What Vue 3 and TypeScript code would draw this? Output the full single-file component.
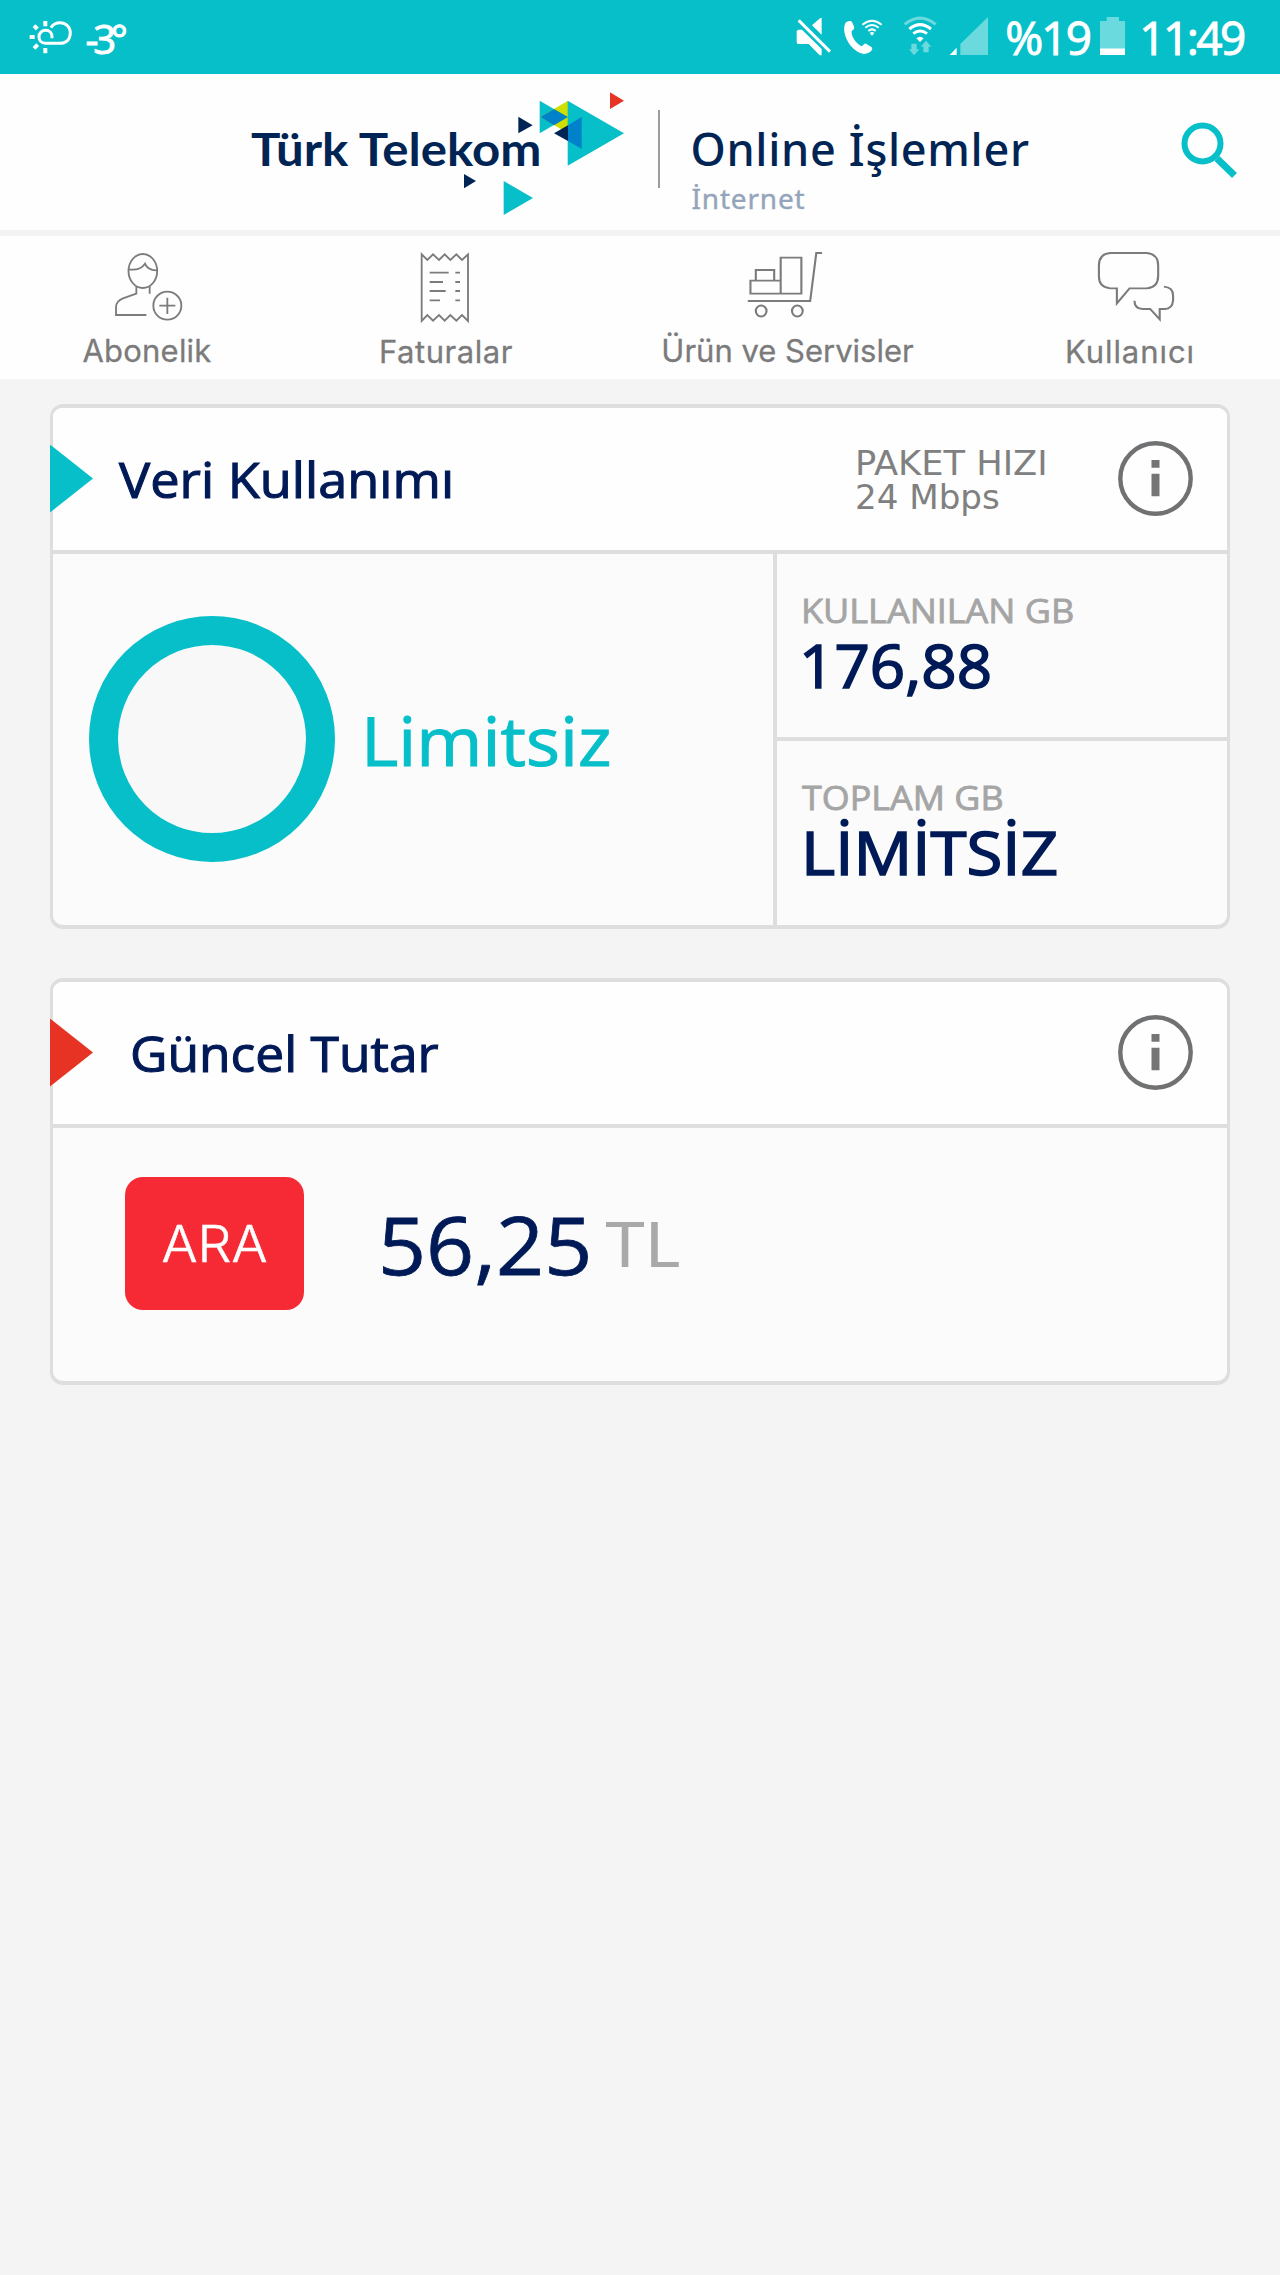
<script setup lang="ts">
interface Stat {
  label: string
  value: string
  kind: string
}

const stats: Stat[] = [
  { label: 'KULLANILAN GB', value: '176,88', kind: 'used' },
  { label: 'TOPLAM GB', value: 'LİMİTSİZ', kind: 'total' },
]
</script>

<template>
  <div class="screen">
    <div class="status">
      <svg class="weather" viewBox="88 0 130 222" fill="none" stroke="#fff" stroke-width="9">
        <path d="M154 83C160 72 171 68 182 68C200 68 212 82 212 99C212 117 200 130 182 130H137C125 130 118 121 118 110C118 99 127 91 138 91C149 91 157 99 157 110V115" />
        <path d="M137 63V79M137 144V160M90 111H105M103 77L113 87M103 145L114 134" stroke-width="12" />
      </svg>
      <span class="temp">-3°</span>
      <div class="spacer"></div>
      <svg class="mute" viewBox="48 0 108 222" fill="#fff">
        <path d="M96 76L121 54H125V104ZM54 89H66L125 147V166H119L86 132H55Q50 132 50 127V94Z" />
        <path d="M56 61L150 155" stroke="#fff" stroke-width="9" />
      </svg>
      <svg class="phone" viewBox="188 0 120 222" fill="none" stroke="#fff">
        <path d="M197 67Q210 59 215 66L222 82Q223 88 214 93C211 107 227 132 245 139Q252 129 257 131L273 141Q279 145 272 154Q262 163 250 162C221 157 196 124 192 95Q190 76 197 67Z" fill="#fff" stroke="none" />
        <path d="M246 74Q275 50 304 74M255 83Q275 67 295 83M264 93Q275 83 286 93" stroke-width="6" />
        <path d="M268 99Q275 93 282 99L275 107Z" fill="#fff" stroke="none" />
      </svg>
      <svg class="wifi" viewBox="370 0 104 222" fill="none" stroke="#fff">
        <path d="M375 73Q421 36 468 73" stroke="#6adadf" stroke-width="9" />
        <path d="M389 87Q421 61 454 87M401 101Q421 85 442 101" stroke-width="9" />
        <path d="M410 115Q421 105 432 115L421 126Z" fill="#fff" stroke="none" />
        <path d="M395 131H411V148H419L403 166L388 148H395ZM431 157V140H423L439 122L455 140H447V157Z" fill="#6adadf" stroke="none" />
      </svg>
      <svg class="signal" viewBox="506 0 120 222">
        <path d="M508 165L529 143V165Z" fill="#fff" />
        <path d="M540 165V132L623 51V165Z" fill="#6adadf" />
      </svg>
      <span class="battery-text">%19</span>
      <svg class="battery" viewBox="960 0 76 222">
        <path d="M960 63H980V51H1017V63H1036V145H960Z" fill="#6adadf" />
        <path d="M960 145H1036V165H960Z" fill="#fff" />
      </svg>
      <span class="clock">11:49</span>
    </div>

    <header class="header">
      <svg class="logo" viewBox="0 0 1260 465">
        <path d="M929 77L1013 126L929 175Z" fill="#06bfc9" />
        <path d="M1014 77V175L931 126Z" fill="#d0df00" />
        <path d="M972 102L1014 126L972 151L931 126Z" fill="#0082ca" />
        <path d="M1013 77L1182 175L1013 272Z" fill="#06bfc9" />
        <path d="M1014 151V198L972 175Z" fill="#002554" />
        <path d="M1055 126V222L1014 198V151Z" fill="#0082ca" />
        <path d="M1140 52L1182 77L1140 102Z" fill="#e73323" />
        <path d="M865 125L908 151L865 175ZM702 297L738 318L702 340Z" fill="#002554" />
        <path d="M821 318L909 369L821 420Z" fill="#06bfc9" />
        <text x="63" y="272" textLength="871" lengthAdjust="spacingAndGlyphs">Türk Telekom</text>
      </svg>
      <div class="rule"></div>
      <div class="titles">
        <div class="title">Online İşlemler</div>
        <div class="subtitle">İnternet</div>
      </div>
      <svg class="search" viewBox="0 0 58 58" fill="none" stroke="#06bfc9">
        <circle cx="21.500" cy="21.500" r="18" stroke-width="6" />
        <path d="M36 36.500L53.500 53.500" stroke-width="7" />
      </svg>
    </header>

    <nav class="nav">
      <a class="item">
        <svg class="i-sub" viewBox="163 3 206 285">
          <ellipse cx="249.500" cy="108" rx="43" ry="51" />
          <path d="M207 103Q241 108 256 86Q264 107 292 106M230 154V176L190 190Q169 199 169 216V240H260M270 154V176" />
          <circle cx="323" cy="212" r="42" />
          <path d="M299 212H347M323 188V237" />
        </svg>
        <span class="l1">Abonelik</span>
      </a>
      <a class="item">
        <svg class="i-bill" viewBox="1081 3 149 285">
          <path d="M1086 258V58L1103 75L1120 58L1138 75L1155 58L1172 75L1190 58L1207 75L1225 58V258L1207 240L1190 257L1172 240L1155 257L1138 240L1120 257L1103 240Z" />
          <path d="M1110 113H1167M1110 141H1150M1110 168H1158M1110 196H1141M1187 113H1201M1187 141H1201M1187 168H1201M1187 196H1201" />
        </svg>
        <span class="l2">Faturalar</span>
      </a>
      <a class="item">
        <svg class="i-cart" viewBox="280 3 198 285" preserveAspectRatio="none">
          <path d="M368 68H422V176H368ZM289 137H368V176H289ZM303 137V105H351V137M282 198H445L461 54H476" />
          <ellipse cx="317" cy="228" rx="14" ry="16.500" />
          <ellipse cx="411.500" cy="228" rx="14" ry="16.500" />
        </svg>
        <span class="l3">Ürün ve Servisler</span>
      </a>
      <a class="item">
        <svg class="i-chat" viewBox="1194 3 204 285" preserveAspectRatio="none">
          <path d="M1246 160H1229Q1199 158 1199 124V92Q1199 56 1229 54H1324Q1354 57 1354 92V122Q1354 157 1324 160H1279L1246 205Z" />
          <path d="M1369 155Q1393 157 1393 182V196Q1391 221 1372 222H1358V253L1333 222H1314Q1292 221 1292 197" />
        </svg>
        <span class="l4">Kullanıcı</span>
      </a>
    </nav>

    <section class="card usage">
      <div class="head">
        <i class="marker"></i>
        <h2 class="t1">Veri Kullanımı</h2>
        <div class="speed">
          <div class="s1">PAKET HIZI</div>
          <div class="s2">24 Mbps</div>
        </div>
        <svg class="info" viewBox="0 0 75 75">
          <circle cx="37.500" cy="37.500" r="35.200" fill="none" stroke="#707172" stroke-width="4.400" />
          <path d="M33.500 19H41.500V26.700H33.500ZM33.500 32.700H41.500V55.300H33.500Z" fill="#757575" />
        </svg>
      </div>
      <div class="body">
        <div class="quota">
          <div class="ring"></div>
          <span class="unlimited">Limitsiz</span>
        </div>
        <div class="stats">
          <div v-for="s in stats" :key="s.kind" class="stat" :class="s.kind">
            <div class="label">{{ s.label }}</div>
            <div class="value">{{ s.value }}</div>
          </div>
        </div>
      </div>
    </section>

    <section class="card bill">
      <div class="head">
        <i class="marker red"></i>
        <h2 class="t2">Güncel Tutar</h2>
        <svg class="info" viewBox="0 0 75 75">
          <circle cx="37.500" cy="37.500" r="35.200" fill="none" stroke="#707172" stroke-width="4.400" />
          <path d="M33.500 19H41.500V26.700H33.500ZM33.500 32.700H41.500V55.300H33.500Z" fill="#757575" />
        </svg>
      </div>
      <div class="amount-row">
        <button class="call"><span>ARA</span></button>
        <span class="amount">56,25</span>
        <span class="currency">TL</span>
      </div>
    </section>
  </div>
</template>

<style>
body {
  background: #f4f4f4;
}
</style>

<style scoped>
.screen {
  box-sizing: border-box;
  width: 1280px;
  height: 2275px;
  background: #f4f4f4;
  font-family: "Open Sans", "Noto Sans", sans-serif;
  white-space: nowrap;
  overflow: hidden;
}
svg {
  display: block;
  flex: none;
}

/* status bar */
.status {
  display: flex;
  height: 74px;
  background: #06bfc9;
  color: #fff;
  -webkit-text-stroke: 1px #fff;
}
.status svg {
  height: 74px;
}
.spacer {
  flex: 1;
}
.weather {
  width: 43.300px;
  margin-left: 29.300px;
}
.temp {
  margin-left: 13px;
  font-size: 40px;
  line-height: 78px;
  letter-spacing: -5.300px;
}
.mute { width: 36px; margin-right: 10.700px; }
.phone { width: 40px; margin-right: 20.600px; }
.wifi { width: 34.700px; margin-right: 10.700px; }
.signal { width: 40px; }
.battery-text {
  width: 111.300px;
  box-sizing: border-box;
  padding-left: 16.500px;
  font-size: 46px;
  line-height: 75px;
  letter-spacing: -1.900px;
}
.battery { width: 25.300px; }
.clock {
  width: 154.700px;
  box-sizing: border-box;
  padding-left: 14px;
  font-size: 46px;
  line-height: 75px;
  letter-spacing: -2.600px;
}

/* header */
.header {
  display: flex;
  box-sizing: border-box;
  height: 162px;
  padding: 1px 0 0 230px;
  background: #fefefe;
  border-bottom: 6px solid #f3f3f3;
}
.logo {
  width: 420px;
  height: 155px;
}
.logo text {
  fill: #002554;
  font: 700 135px Lato, "Open Sans", sans-serif;
}
.rule {
  width: 2px;
  height: 78px;
  margin: 35px 0 0 7.500px;
  background: #9c9c9c;
}
.titles {
  width: 487.500px;
  margin: 43.500px 0 0 31px;
}
.title {
  color: #002554;
  font: 500 45px/60px "Noto Sans", sans-serif;
  letter-spacing: 0.680px;
}
.subtitle {
  margin: -1px 0 0 1px;
  color: #94a5bb;
  font: 400 28px/40px "Noto Sans", sans-serif;
  letter-spacing: 0.810px;
  -webkit-text-stroke: 0.400px #94a5bb;
}
.search {
  width: 58px;
  height: 58px;
  margin: 47px 0 0 2.500px;
}

/* navigation */
.nav {
  display: grid;
  grid-template-columns: 294px 304px 382px 300px;
  height: 143px;
  background: #fefefe;
}
.item {
  display: flex;
  flex-direction: column;
  align-items: center;
  color: #7b7b7b;
  font: 400 31px/40px Inter, sans-serif;
  -webkit-text-stroke: 0.300px #7b7b7b;
}
.item svg {
  height: 95px;
  fill: none;
  stroke: #7b7b7b;
  stroke-width: 5.500;
}
.i-sub { width: 68.700px; margin-left: 3px; }
.i-bill { width: 49.700px; margin-left: -2px; }
.i-cart { width: 75.800px; margin-left: -8px; }
.i-chat { width: 78px; margin-left: 11px; }
.l1 { letter-spacing: 0.230px; }
.l2 { letter-spacing: 0.550px; padding-top: 1px; }
.l3 { margin-left: -3px; }
.l4 { letter-spacing: 0.930px; padding-top: 1px; }

/* cards */
.card {
  box-sizing: border-box;
  width: 1180px;
  margin-left: 50px;
  border: solid #dedede;
  border-width: 4px 3px;
  border-radius: 13px;
  background: #fbfbfb;
}
.usage {
  height: 525px;
  margin-top: 25px;
}
.bill {
  height: 407px;
  margin-top: 49px;
}
.head {
  position: relative;
  display: flex;
  align-items: center;
  box-sizing: border-box;
  height: 146px;
  padding-right: 34px;
  border-bottom: 4px solid #dedede;
  border-radius: 9px 9px 0 0;
  background: #fefefe;
}
.marker {
  position: absolute;
  left: -3px;
  top: 36.500px;
  width: 43px;
  height: 68px;
  background: #06bfc9;
  clip-path: polygon(0 0, 100% 50%, 0 100%);
}
.marker.red {
  background: #e73323;
}
h2, .speed div, .unlimited, .label, .value, .amount, .currency {
  transform-origin: 0 50%;
}
h2 {
  margin: 0;
  color: #001a57;
  font-size: 50px;
  font-weight: 500;
  line-height: 70px;
  -webkit-text-stroke: 1.100px #001a57;
}
.t1 {
  width: 672px;
  margin-left: 66px;
  transform: scaleX(1.046);
}
.t2 {
  margin-left: 77px;
  transform: scaleX(1.030);
}
.speed {
  margin: 4px 0 0 64px;
  color: #808080;
  font: 400 34px/33.700px "DejaVu Sans", sans-serif;
}
.s1 { transform: scaleX(1.036); }
.s2 { font-size: 33px; transform: scaleX(1.034); }
.info {
  width: 75px;
  height: 75px;
  margin: 0 0 1px auto;
}
.body {
  display: flex;
  height: 371px;
}
.quota {
  display: flex;
  align-items: center;
  width: 720px;
}
.ring {
  box-sizing: border-box;
  width: 246px;
  height: 246px;
  margin: 0 0 1px 35.500px;
  border: 29.500px solid #06bfc9;
  border-radius: 50%;
  background: #f8f8f8;
}
.unlimited {
  margin-left: 26px;
  color: #06bfc9;
  font-size: 67px;
  font-weight: 500;
  line-height: 80px;
  transform: scaleX(1.066);
  -webkit-text-stroke: 1px #06bfc9;
}
.stats {
  flex: 1;
  border-left: 4px solid #dedede;
}
.stat {
  box-sizing: border-box;
  height: 187px;
  padding: 37px 0 0 24px;
}
.stat + .stat {
  height: 184px;
}
.stat.used {
  border-bottom: 4px solid #dedede;
}
.label {
  width: 270px;
  color: #a5a5a5;
  font-size: 33px;
  font-weight: 500;
  line-height: 40px;
  transform: scaleX(1.091);
  -webkit-text-stroke: 0.800px #a5a5a5;
}
.total .label {
  padding-left: 1px;
  transform: scaleX(1.087);
}
.value {
  width: 260px;
  margin-top: 2px;
  color: #001a57;
  font-size: 61px;
  font-weight: 500;
  line-height: 64px;
  -webkit-text-stroke: 1.600px #001a57;
}
.used .value {
  margin-left: -2px;
  transform: scaleX(1.015);
}
.total .value {
  font-size: 60px;
  transform: scaleX(1.090);
}

/* current amount */
.amount-row {
  display: flex;
  align-items: center;
  padding: 49px 0 0 71.500px;
}
.call {
  width: 179.500px;
  height: 133px;
  padding: 1px 0 0;
  border: 0;
  border-radius: 18px;
  background: #f52a35;
  color: #fff;
  font: 300 50px/70px Inter, "Open Sans", sans-serif;
}
.call span {
  display: inline-block;
  transform: scaleX(1.070);
  -webkit-text-stroke: 0.500px #fff;
}
.amount {
  width: 222px;
  box-sizing: border-box;
  margin-left: 74px;
  color: #001a57;
  font-size: 80px;
  line-height: 100px;
  transform: scaleX(1.052);
  -webkit-text-stroke: 0.800px #001a57;
}
.currency {
  margin: 1px 0 0 5px;
  color: #a9a9a9;
  font: 400 61px/80px Lato, sans-serif;
  transform: scaleX(1.110);
}
</style>
